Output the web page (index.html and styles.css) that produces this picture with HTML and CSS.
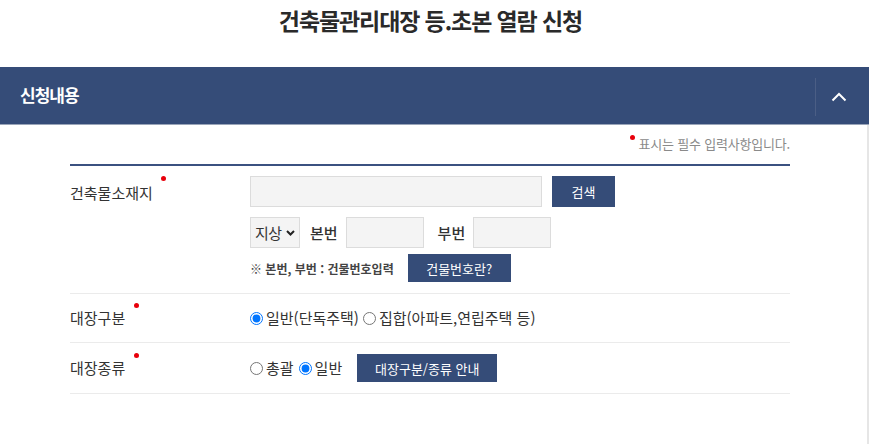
FILE: index.html
```html
<!DOCTYPE html>
<html lang="ko">
<head>
<meta charset="utf-8">
<title>건축물관리대장 등.초본 열람 신청</title>
<link rel="stylesheet" href="styles.css">
</head>
<body>
<h1 class="page-title">건축물관리대장 등.초본 열람 신청</h1>
<section class="panel">
  <div class="panel-head">
    <h2 class="panel-title">신청내용</h2>
    <button class="panel-toggle" type="button" aria-label="접기">
      <svg width="16" height="10" viewBox="0 0 16 10"><path d="M1.5 8.5 L8 2 L14.5 8.5" fill="none" stroke="#fff" stroke-width="2"/></svg>
    </button>
  </div>
  <div class="panel-body">
    <p class="req-note"><span class="req-dot"></span>표시는 필수 입력사항입니다.</p>
    <div class="form-table">
      <div class="form-row row-addr">
        <div class="form-label label-addr"><span>건축물소재지</span><span class="req-dot"></span></div>
        <div class="form-field">
          <div class="field-line">
            <input class="text-input addr-input" type="text">
            <button class="btn btn-search" type="button">검색</button>
          </div>
          <div class="field-line line-num">
            <div class="select-box">지상<svg width="9" height="6" viewBox="0 0 9 6"><path d="M1 1 L4.5 4.5 L8 1" fill="none" stroke="#222" stroke-width="2"/></svg></div>
            <span class="num-label">본번</span>
            <input class="text-input num-input" type="text">
            <span class="num-label num-label-2">부번</span>
            <input class="text-input num-input" type="text">
          </div>
          <div class="field-line help-line">
            <span class="help-text">※ 본번, 부번 : 건물번호입력</span>
            <button class="btn btn-small btn-bldg" type="button">건물번호란?</button>
          </div>
        </div>
      </div>
      <div class="form-row row-radio">
        <div class="form-label"><span>대장구분</span><span class="req-dot"></span></div>
        <div class="form-field radio-line">
          <label class="radio"><input type="radio" name="gubun" checked>일반(단독주택)</label>
          <label class="radio"><input type="radio" name="gubun">집합(아파트,연립주택 등)</label>
        </div>
      </div>
      <div class="form-row row-kind">
        <div class="form-label"><span>대장종류</span><span class="req-dot"></span></div>
        <div class="form-field radio-line">
          <label class="radio radio-first"><input type="radio" name="kind">총괄</label>
          <label class="radio"><input type="radio" name="kind" checked>일반</label>
          <button class="btn btn-small btn-guide" type="button">대장구분/종류 안내</button>
        </div>
      </div>
    </div>
  </div>
</section>
</body>
</html>
```
FILE: styles.css
```css
* { box-sizing: border-box; }

html, body {
  margin: 0;
  padding: 0;
  background: #fff;
}

body {
  font-family: "Noto Sans CJK KR", "Noto Sans", sans-serif;
  font-size: 15px;
  color: #333;
}

.page-title {
  margin: 0;
  padding: 3px 8px 0 0;
  height: 67px;
  line-height: 34px;
  font-size: 23px;
  font-weight: 700;
  letter-spacing: -1.1px;
  color: #2a2a2a;
  text-align: center;
}

.panel {
  width: 869px;
}

.panel-head {
  height: 58px;
  background: #354c78;
  border-bottom: 1px solid #9aa5b9;
  display: flex;
  align-items: center;
  padding: 0 7px 0 20px;
}

.panel-title {
  flex: 1;
  margin: 0;
  color: #fff;
  font-size: 17px;
  font-weight: 700;
  letter-spacing: -1px;
  line-height: 24px;
  padding-bottom: 2px;
}

.panel-toggle {
  width: 47px;
  height: 38px;
  border: 0;
  border-left: 1px solid #4b5e85;
  background: transparent;
  padding: 0;
  display: flex;
  align-items: center;
  justify-content: center;
  margin-top: 2px;
}

.panel-body {
  border-right: 2px solid #e6e6e6;
  padding: 0 77px 60px 70px;
}

.req-note {
  margin: 0;
  height: 39px;
  padding-top: 9px;
  line-height: 20px;
  text-align: right;
  font-size: 13px;
  color: #8a8a8a;
  letter-spacing: -0.2px;
}

.req-dot {
  display: inline-block;
  width: 5px;
  height: 5px;
  border-radius: 50%;
  background: #e8000b;
  flex: none;
}

.req-note .req-dot {
  vertical-align: 9px;
  margin-right: 4px;
}

.form-table {
  border-top: 2px solid #3b5180;
}

.form-row {
  display: grid;
  grid-template-columns: 180px 1fr;
  border-bottom: 1px solid #ebebeb;
}

.row-addr { padding: 10px 0 11px; }
.row-radio { padding: 13px 0; }
.row-kind { padding: 11px 0; }

.form-label {
  display: flex;
  align-items: flex-start;
  align-self: start;
  font-size: 15px;
  color: #333;
  line-height: 22px;
}

.form-label .req-dot {
  margin: -4px 0 0 9px;
}

.label-addr { padding-top: 6px; }
.label-addr .req-dot { margin: -6px 0 0 8px; }
.row-kind .form-label { padding-top: 3px; }

.field-line {
  display: flex;
  align-items: center;
}

.line-num { margin-top: 10px; }
.help-line { margin-top: 6px; }

.text-input {
  height: 31px;
  background: #f4f4f4;
  border: 1px solid #dcdcdc;
  padding: 0 6px;
  font-family: inherit;
  font-size: 13px;
  outline: none;
}

.addr-input { width: 292px; }
.num-input { width: 78px; }

.btn {
  border: 0;
  background: #354c78;
  color: #fff;
  font-family: inherit;
  font-size: 13px;
  padding: 0;
}

.btn-search {
  width: 63px;
  height: 31px;
  margin-left: 10px;
}

.select-box {
  width: 50px;
  height: 31px;
  background: #f4f4f4;
  border: 1px solid #dcdcdc;
  display: flex;
  align-items: center;
  padding-left: 4px;
  gap: 4px;
  font-size: 15px;
  letter-spacing: -0.5px;
  color: #333;
}

.num-label {
  margin: 0 8px 0 10px;
  font-size: 15px;
  color: #333;
  font-weight: 500;
}

.num-label-2 { margin-left: 14px; }

.help-text {
  font-size: 12px;
  font-weight: 700;
  color: #444;
}

.btn-small { height: 28px; }

.btn-bldg {
  width: 103px;
  margin-left: 14px;
}

.radio-line {
  display: flex;
  align-items: center;
  align-self: start;
}

.radio {
  display: inline-flex;
  align-items: center;
  font-size: 15px;
  color: #333;
  line-height: 22px;
  margin-right: 4px;
}

.radio-first { margin-right: 5px; }

.radio input {
  width: 13px;
  height: 13px;
  margin: 0 3px 0 0;
}

.btn-guide {
  width: 140px;
  margin-left: 11px;
}
```
